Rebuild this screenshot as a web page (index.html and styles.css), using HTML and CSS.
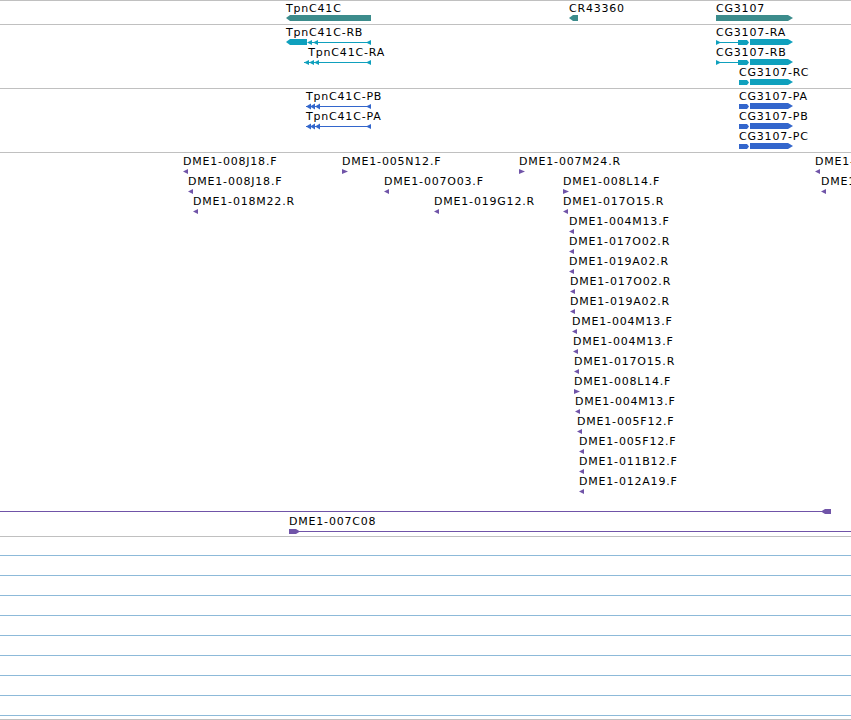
FILE: index.html
```html
<!DOCTYPE html>
<html lang="en">
<head>
    <meta charset="UTF-8">
    <title>Genome Browser - 2R</title>
    <link rel="stylesheet" href="styles.css">
</head>
<body>
<div class="browser">

    <!-- genes -->
    <div class="track track-genes">
        <div class="feat" style="left:286px;top:1px">
            <span class="lbl">TpnC41C</span>
            <svg class="gene" width="85" height="10"><polygon points="0,5 4,2 85,2 85,8 4,8"/></svg>
        </div>
        <div class="feat" style="left:569px;top:1px">
            <span class="lbl">CR43360</span>
            <svg class="gene" width="9" height="10"><polygon points="0,5 4,2 9,2 9,8 4,8"/></svg>
        </div>
        <div class="feat" style="left:716px;top:1px">
            <span class="lbl">CG3107</span>
            <svg class="gene" width="77" height="10"><polygon points="0,2 72,2 77,5 72,8 0,8"/></svg>
        </div>
    </div>

    <!-- transcripts -->
    <div class="track track-tx">
        <div class="feat" style="left:286px;top:1px">
            <span class="lbl">TpnC41C-RB</span>
            <svg class="tx" width="85" height="10">
                <polygon points="0,5 4,2 21,2 21,8 4,8"/>
                <polygon points="21,5.5 26,3 26,8"/>
                <polygon points="27,5.5 32,3 32,8"/>
                <line x1="26" y1="5.5" x2="85" y2="5.5"/>
                <polygon points="80,5.5 85,3 85,8"/>
            </svg>
        </div>
        <div class="feat" style="left:304px;top:21px">
            <span class="lbl">&nbsp;TpnC41C-RA</span>
            <svg class="tx" width="67" height="10">
                <polygon points="0,5.5 5,3 5,8"/>
                <polygon points="5,5.5 10,3 10,8"/>
                <polygon points="10,5.5 15,3 15,8"/>
                <line x1="0" y1="5.5" x2="67" y2="5.5"/>
                <polygon points="62,5.5 67,3 67,8"/>
            </svg>
        </div>
        <div class="feat" style="left:716px;top:1px">
            <span class="lbl">CG3107-RA</span>
            <svg class="tx" width="77" height="10">
                <polygon points="0,3 5,5.5 0,8"/>
                <line x1="0" y1="5.5" x2="23" y2="5.5"/>
                <polygon points="22,3 31,3 33,5.5 31,8 22,8"/>
                <polygon points="34,2 72,2 77,5 72,8 34,8"/>
            </svg>
        </div>
        <div class="feat" style="left:716px;top:21px">
            <span class="lbl">CG3107-RB</span>
            <svg class="tx" width="77" height="10">
                <polygon points="0,3 5,5.5 0,8"/>
                <line x1="0" y1="5.5" x2="23" y2="5.5"/>
                <polygon points="22,3 31,3 33,5.5 31,8 22,8"/>
                <polygon points="34,2 72,2 77,5 72,8 34,8"/>
            </svg>
        </div>
        <div class="feat" style="left:739px;top:41px">
            <span class="lbl">CG3107-RC</span>
            <svg class="tx" width="54" height="10">
                <polygon points="0,3 8,3 10,5.5 8,8 0,8"/>
                <polygon points="11,2 49,2 54,5 49,8 11,8"/>
            </svg>
        </div>
    </div>

    <!-- proteins -->
    <div class="track track-prot">
        <div class="feat" style="left:306px;top:1px">
            <span class="lbl">TpnC41C-PB</span>
            <svg class="prot" width="65" height="10">
                <polygon points="0,5.5 5,2.5 5,8.5"/>
                <polygon points="4,5.5 9,2.5 9,8.5"/>
                <polygon points="9,5.5 14,2.5 14,8.5"/>
                <line x1="0" y1="5.5" x2="65" y2="5.5"/>
                <polygon points="60,5.5 65,3 65,8"/>
            </svg>
        </div>
        <div class="feat" style="left:306px;top:21px">
            <span class="lbl">TpnC41C-PA</span>
            <svg class="prot" width="65" height="10">
                <polygon points="0,5.5 5,2.5 5,8.5"/>
                <polygon points="4,5.5 9,2.5 9,8.5"/>
                <polygon points="9,5.5 14,2.5 14,8.5"/>
                <line x1="0" y1="5.5" x2="65" y2="5.5"/>
                <polygon points="60,5.5 65,3 65,8"/>
            </svg>
        </div>
        <div class="feat" style="left:739px;top:1px">
            <span class="lbl">CG3107-PA</span>
            <svg class="prot" width="54" height="10">
                <polygon points="0,3 8,3 10,5.5 8,8 0,8"/>
                <polygon points="11,2 49,2 54,5 49,8 11,8"/>
            </svg>
        </div>
        <div class="feat" style="left:739px;top:21px">
            <span class="lbl">CG3107-PB</span>
            <svg class="prot" width="54" height="10">
                <polygon points="0,3 8,3 10,5.5 8,8 0,8"/>
                <polygon points="11,2 49,2 54,5 49,8 11,8"/>
            </svg>
        </div>
        <div class="feat" style="left:739px;top:41px">
            <span class="lbl">CG3107-PC</span>
            <svg class="prot" width="54" height="10">
                <polygon points="0,3 8,3 10,5.5 8,8 0,8"/>
                <polygon points="11,2 49,2 54,5 49,8 11,8"/>
            </svg>
        </div>
    </div>

    <!-- BAC end clones -->
    <div class="track track-clones">
        <div class="feat" style="left:183px;top:2px"><span class="lbl">DME1-008J18.F</span><svg class="clone" width="6" height="10"><polygon points="0,5.5 5,3 5,8"/></svg></div>
        <div class="feat" style="left:342px;top:2px"><span class="lbl">DME1-005N12.F</span><svg class="clone" width="6" height="10"><polygon points="0,3 6,5.5 0,8"/></svg></div>
        <div class="feat" style="left:519px;top:2px"><span class="lbl">DME1-007M24.R</span><svg class="clone" width="6" height="10"><polygon points="0,3 6,5.5 0,8"/></svg></div>
        <div class="feat" style="left:815px;top:2px"><span class="lbl">DME1-017O15.R</span><svg class="clone" width="6" height="10"><polygon points="0,5.5 5,3 5,8"/></svg></div>

        <div class="feat" style="left:188px;top:22px"><span class="lbl">DME1-008J18.F</span><svg class="clone" width="6" height="10"><polygon points="0,5.5 5,3 5,8"/></svg></div>
        <div class="feat" style="left:384px;top:22px"><span class="lbl">DME1-007O03.F</span><svg class="clone" width="6" height="10"><polygon points="0,5.5 5,3 5,8"/></svg></div>
        <div class="feat" style="left:563px;top:22px"><span class="lbl">DME1-008L14.F</span><svg class="clone" width="6" height="10"><polygon points="0,3 6,5.5 0,8"/></svg></div>
        <div class="feat" style="left:821px;top:22px"><span class="lbl">DME1-019A02.R</span><svg class="clone" width="6" height="10"><polygon points="0,5.5 5,3 5,8"/></svg></div>

        <div class="feat" style="left:193px;top:42px"><span class="lbl">DME1-018M22.R</span><svg class="clone" width="6" height="10"><polygon points="0,5.5 5,3 5,8"/></svg></div>
        <div class="feat" style="left:434px;top:42px"><span class="lbl">DME1-019G12.R</span><svg class="clone" width="6" height="10"><polygon points="0,5.5 5,3 5,8"/></svg></div>
        <div class="feat" style="left:563px;top:42px"><span class="lbl">DME1-017O15.R</span><svg class="clone" width="6" height="10"><polygon points="0,5.5 5,3 5,8"/></svg></div>

        <div class="feat" style="left:569px;top:62px"><span class="lbl">DME1-004M13.F</span><svg class="clone" width="6" height="10"><polygon points="0,5.5 5,3 5,8"/></svg></div>
        <div class="feat" style="left:569px;top:82px"><span class="lbl">DME1-017O02.R</span><svg class="clone" width="6" height="10"><polygon points="0,5.5 5,3 5,8"/></svg></div>
        <div class="feat" style="left:569px;top:102px"><span class="lbl">DME1-019A02.R</span><svg class="clone" width="6" height="10"><polygon points="0,5.5 5,3 5,8"/></svg></div>
        <div class="feat" style="left:570px;top:122px"><span class="lbl">DME1-017O02.R</span><svg class="clone" width="6" height="10"><polygon points="0,5.5 5,3 5,8"/></svg></div>
        <div class="feat" style="left:570px;top:142px"><span class="lbl">DME1-019A02.R</span><svg class="clone" width="6" height="10"><polygon points="0,5.5 5,3 5,8"/></svg></div>
        <div class="feat" style="left:572px;top:162px"><span class="lbl">DME1-004M13.F</span><svg class="clone" width="6" height="10"><polygon points="0,5.5 5,3 5,8"/></svg></div>
        <div class="feat" style="left:573px;top:182px"><span class="lbl">DME1-004M13.F</span><svg class="clone" width="6" height="10"><polygon points="0,5.5 5,3 5,8"/></svg></div>
        <div class="feat" style="left:574px;top:202px"><span class="lbl">DME1-017O15.R</span><svg class="clone" width="6" height="10"><polygon points="0,5.5 5,3 5,8"/></svg></div>
        <div class="feat" style="left:574px;top:222px"><span class="lbl">DME1-008L14.F</span><svg class="clone" width="6" height="10"><polygon points="0,3 6,5.5 0,8"/></svg></div>
        <div class="feat" style="left:575px;top:242px"><span class="lbl">DME1-004M13.F</span><svg class="clone" width="6" height="10"><polygon points="0,5.5 5,3 5,8"/></svg></div>
        <div class="feat" style="left:577px;top:262px"><span class="lbl">DME1-005F12.F</span><svg class="clone" width="6" height="10"><polygon points="0,5.5 5,3 5,8"/></svg></div>
        <div class="feat" style="left:579px;top:282px"><span class="lbl">DME1-005F12.F</span><svg class="clone" width="6" height="10"><polygon points="0,5.5 5,3 5,8"/></svg></div>
        <div class="feat" style="left:579px;top:302px"><span class="lbl">DME1-011B12.F</span><svg class="clone" width="6" height="10"><polygon points="0,5.5 5,3 5,8"/></svg></div>
        <div class="feat" style="left:579px;top:322px"><span class="lbl">DME1-012A19.F</span><svg class="clone" width="6" height="10"><polygon points="0,5.5 5,3 5,8"/></svg></div>

        <div class="feat" style="left:0;top:342px">
            <span class="lbl"></span>
            <svg class="clone" width="831" height="10">
                <line x1="0" y1="5.5" x2="822" y2="5.5"/>
                <polygon points="821,5.5 825,3 831,3 831,8 825,8"/>
            </svg>
        </div>
        <div class="feat" style="left:289px;top:362px">
            <span class="lbl">DME1-007C08</span>
            <svg class="clone" width="562" height="10">
                <polygon points="0,3 7,3 11,5.5 7,8 0,8"/>
                <line x1="10" y1="5.5" x2="562" y2="5.5"/>
            </svg>
        </div>
    </div>

    <!-- empty tracks -->
    <div class="rulers">
        <div class="rule"></div>
        <div class="rule"></div>
        <div class="rule"></div>
        <div class="rule"></div>
        <div class="rule"></div>
        <div class="rule"></div>
        <div class="rule"></div>
        <div class="rule"></div>
        <div class="rule"></div>
    </div>
    <div class="end"></div>

</div>
</body>
</html>
```

FILE: styles.css
```css
html, body {
    margin: 0;
    padding: 0;
    background: #fff;
    overflow: hidden;
}
.browser {
    width: 851px;
    height: 720px;
    overflow: hidden;
    font-family: "DejaVu Sans", Verdana, sans-serif;
    color: #000;
}
.track {
    position: relative;
    border-top: 1px solid #c0c0c0;
}
.track-genes {
    height: 23px;
}
.track-tx,
.track-prot {
    height: 63px;
}
.track-clones {
    height: 383px;
}
.feat {
    position: absolute;
}
.lbl {
    display: block;
    height: 14px;
    font-size: 11px;
    line-height: 14px;
    letter-spacing: 0.8px;
    white-space: nowrap;
}
.feat svg {
    display: block;
    margin-top: -3px;
    overflow: visible;
}
.feat polygon {
    fill: currentColor;
}
.feat line {
    stroke: currentColor;
    stroke-width: 1;
}
.gene {
    color: #3c8c8c;
}
.tx {
    color: #0fa0bd;
}
.prot {
    color: #3366cc;
}
.clone {
    color: #7054a8;
}
.rulers {
    border-top: 1px solid #c0c0c0;
    padding-top: 18px;
}
.rule {
    height: 19px;
    border-top: 1px solid #8dbad9;
}
.rule:last-child {
    height: 3px;
}
.end {
    border-top: 1px solid #c0c0c0;
}
```
